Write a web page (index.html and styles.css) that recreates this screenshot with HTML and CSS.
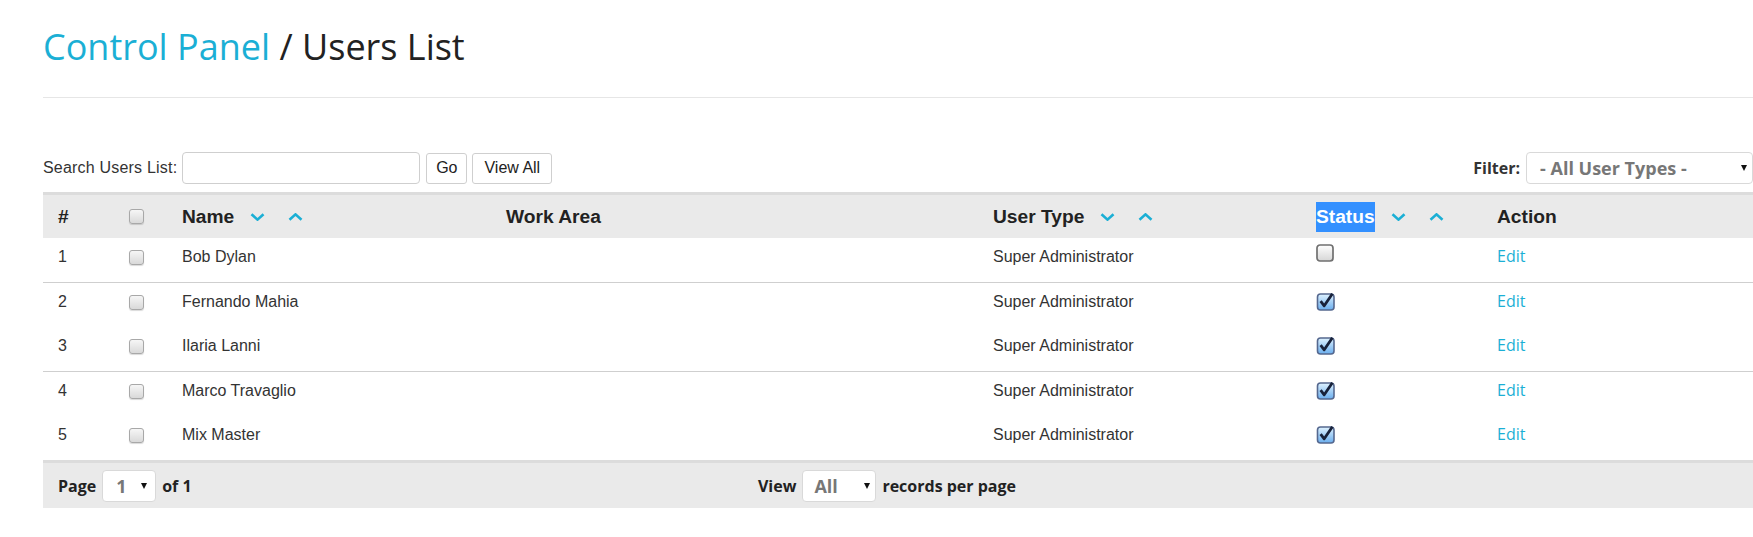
FILE: index.html
```html
<!DOCTYPE html>
<html lang="en">
<head>
<meta charset="utf-8">
<title>Control Panel / Users List</title>
<link rel="stylesheet" href="styles.css">
</head>
<body>
<svg class="defs" width="0" height="0" aria-hidden="true">
  <defs>
    <linearGradient id="gUn" x1="0" y1="0" x2="0" y2="1">
      <stop offset="0" stop-color="#ffffff"/>
      <stop offset="1" stop-color="#d6d6d6"/>
    </linearGradient>
    <linearGradient id="gCk" x1="0" y1="0" x2="0" y2="1">
      <stop offset="0" stop-color="#dff2fe"/>
      <stop offset="1" stop-color="#6aaeee"/>
    </linearGradient>
  </defs>
</svg>
<div class="page">
  <h1 class="title"><a class="crumb" href="#">Control Panel</a> / Users List</h1>
  <div class="divider"></div>

  <div class="toolbar">
    <div class="search">
      <span class="search-label">Search Users List:</span>
      <input class="search-input" type="text">
      <button class="btn btn-go">Go</button>
      <button class="btn btn-all">View All</button>
    </div>
    <div class="filter">
      <span class="filter-label">Filter:</span>
      <div class="selbox selbox-filter"><span>- All User Types -</span><i class="caret"></i></div>
    </div>
  </div>

  <table class="users">
    <colgroup>
      <col class="c-num"><col class="c-cb"><col class="c-name"><col class="c-area"><col class="c-type"><col class="c-status"><col class="c-action">
    </colgroup>
    <thead>
      <tr>
        <th>#</th>
        <th><span class="cb cb-head"></span></th>
        <th>Name<svg class="chev chev-down" viewBox="0 0 15 8"><polyline points="1.5,1.2 7.5,6.6 13.5,1.2"/></svg><svg class="chev chev-up" viewBox="0 0 15 8"><polyline points="1.5,6.8 7.5,1.4 13.5,6.8"/></svg></th>
        <th>Work Area</th>
        <th>User Type<svg class="chev chev-down" viewBox="0 0 15 8"><polyline points="1.5,1.2 7.5,6.6 13.5,1.2"/></svg><svg class="chev chev-up" viewBox="0 0 15 8"><polyline points="1.5,6.8 7.5,1.4 13.5,6.8"/></svg></th>
        <th><span class="selected">Status</span><svg class="chev chev-down" viewBox="0 0 15 8"><polyline points="1.5,1.2 7.5,6.6 13.5,1.2"/></svg><svg class="chev chev-up" viewBox="0 0 15 8"><polyline points="1.5,6.8 7.5,1.4 13.5,6.8"/></svg></th>
        <th>Action</th>
      </tr>
    </thead>
    <tbody>
      <tr class="sep">
        <td>1</td><td><span class="cb"></span></td><td>Bob Dylan</td><td></td><td>Super Administrator</td>
        <td><svg class="st st-off" width="18" height="18" viewBox="0 0 18 18"><rect x="1" y="1" width="16" height="16" rx="3" fill="url(#gUn)" stroke="#707070" stroke-width="1.7"/></svg></td>
        <td class="act"><a class="edit" href="#">Edit</a></td>
      </tr>
      <tr>
        <td>2</td><td><span class="cb"></span></td><td>Fernando Mahia</td><td></td><td>Super Administrator</td>
        <td><svg class="st" width="20" height="19" viewBox="0 0 20 19"><rect x="1.5" y="2" width="16.5" height="16" rx="3" fill="url(#gCk)" stroke="#55688f" stroke-width="1.6"/><path d="M4.6 9.2 L8.2 13.8 L16.4 1.8" fill="none" stroke="#18223a" stroke-width="2.8" stroke-linejoin="round"/></svg></td>
        <td class="act"><a class="edit" href="#">Edit</a></td>
      </tr>
      <tr class="sep">
        <td>3</td><td><span class="cb"></span></td><td>Ilaria Lanni</td><td></td><td>Super Administrator</td>
        <td><svg class="st" width="20" height="19" viewBox="0 0 20 19"><rect x="1.5" y="2" width="16.5" height="16" rx="3" fill="url(#gCk)" stroke="#55688f" stroke-width="1.6"/><path d="M4.6 9.2 L8.2 13.8 L16.4 1.8" fill="none" stroke="#18223a" stroke-width="2.8" stroke-linejoin="round"/></svg></td>
        <td class="act"><a class="edit" href="#">Edit</a></td>
      </tr>
      <tr>
        <td>4</td><td><span class="cb"></span></td><td>Marco Travaglio</td><td></td><td>Super Administrator</td>
        <td><svg class="st" width="20" height="19" viewBox="0 0 20 19"><rect x="1.5" y="2" width="16.5" height="16" rx="3" fill="url(#gCk)" stroke="#55688f" stroke-width="1.6"/><path d="M4.6 9.2 L8.2 13.8 L16.4 1.8" fill="none" stroke="#18223a" stroke-width="2.8" stroke-linejoin="round"/></svg></td>
        <td class="act"><a class="edit" href="#">Edit</a></td>
      </tr>
      <tr>
        <td>5</td><td><span class="cb"></span></td><td>Mix Master</td><td></td><td>Super Administrator</td>
        <td><svg class="st" width="20" height="19" viewBox="0 0 20 19"><rect x="1.5" y="2" width="16.5" height="16" rx="3" fill="url(#gCk)" stroke="#55688f" stroke-width="1.6"/><path d="M4.6 9.2 L8.2 13.8 L16.4 1.8" fill="none" stroke="#18223a" stroke-width="2.8" stroke-linejoin="round"/></svg></td>
        <td class="act"><a class="edit" href="#">Edit</a></td>
      </tr>
    </tbody>
  </table>

  <div class="tfoot">
    <div class="pager">
      <span class="flabel">Page</span>
      <div class="selbox selbox-page"><span>1</span><i class="caret"></i></div>
      <span class="flabel">of 1</span>
    </div>
    <div class="pager">
      <span class="flabel">View</span>
      <div class="selbox selbox-view"><span>All</span><i class="caret"></i></div>
      <span class="flabel">records per page</span>
    </div>
    <div></div>
  </div>
</div>
</body>
</html>
```

FILE: styles.css
```css
html, body {
  margin: 0;
  padding: 0;
  background: #fff;
}

body {
  font-family: "Liberation Sans", Arial, sans-serif;
  font-size: 16px;
  color: #333;
}

.defs {
  display: block;
  width: 0;
  height: 0;
  overflow: hidden;
}

.page {
  padding-left: 43px;
}

.title {
  margin: 0;
  padding-top: 27px;
  font-family: "Open Sans", "Liberation Sans", sans-serif;
  font-weight: 400;
  font-size: 36px;
  line-height: 40px;
  color: #222;
}

.crumb {
  color: #1bafd5;
  text-decoration: none;
}

.divider {
  margin-top: 30px;
  height: 1px;
  background: #e6e6e6;
}

.toolbar {
  margin-top: 54px;
  height: 32px;
  display: flex;
  justify-content: space-between;
  align-items: center;
}

.search {
  display: flex;
  align-items: center;
}

.search-label {
  color: #333;
  letter-spacing: 0.2px;
  margin-right: 5px;
}

.search-input {
  box-sizing: border-box;
  width: 238px;
  height: 32px;
  border: 1px solid #cfcfcf;
  border-radius: 4px;
  margin: 0;
  padding: 0 6px;
  font: 16px "Liberation Sans", Arial, sans-serif;
}

.btn {
  box-sizing: border-box;
  height: 31px;
  margin: 0 0 0 6px;
  padding: 0;
  background: #fff;
  border: 1px solid #cfcfcf;
  border-radius: 3px;
  font: 16px "Liberation Sans", Arial, sans-serif;
  color: #222;
  text-align: center;
}

.btn-go { width: 41px; }
.btn-all { width: 80px; margin-left: 5px; }

.filter {
  display: flex;
  align-items: center;
}

.filter-label {
  font-family: "Open Sans", "Liberation Sans", sans-serif;
  font-weight: 700;
  font-size: 16px;
  color: #333;
  margin-right: 6px;
}

.selbox {
  box-sizing: border-box;
  height: 32px;
  display: flex;
  align-items: center;
  justify-content: space-between;
  background: #fff;
  border: 1px solid #d9d9d9;
  border-radius: 4px;
  font-family: "Open Sans", "Liberation Sans", sans-serif;
  font-weight: 700;
  font-size: 18px;
  color: #777;
}

.selbox-filter {
  width: 227px;
  padding: 0 5px 0 13px;
}

.selbox-page {
  width: 54px;
  padding: 0 8px 0 13px;
}

.selbox-view {
  width: 74px;
  padding: 0 5px 0 11px;
}

.caret {
  display: block;
  width: 0;
  height: 0;
  border-left: 3px solid transparent;
  border-right: 3px solid transparent;
  border-top: 6px solid #111;
}

/* Table */
.users {
  width: 100%;
  margin-top: 8px;
  border-collapse: collapse;
  table-layout: fixed;
}

.c-num { width: 71px; }
.c-cb { width: 53px; }
.c-name { width: 324px; }
.c-area { width: 487px; }
.c-type { width: 323px; }
.c-status { width: 181px; }
.c-action { width: auto; }

.users thead tr {
  background: #eaeaea;
  border-top: 3px solid #dcdcdc;
}

.users th {
  height: 43px;
  padding: 0 15px;
  text-align: left;
  vertical-align: middle;
  font-family: "Liberation Sans", Arial, sans-serif;
  font-weight: 700;
  font-size: 19.2px;
  line-height: 30px;
  color: #222;
  white-space: nowrap;
}

.selected {
  display: inline-block;
  background: #3390ff;
  color: #fff;
  line-height: 30px;
  vertical-align: top;
}

.chev {
  width: 15px;
  height: 8px;
  vertical-align: middle;
  fill: none;
  stroke: #1bafd5;
  stroke-width: 2.6;
}

.chev-down { margin-left: 16px; }
.chev-up { margin-left: 23px; }

.users td {
  height: 20px;
  padding: 9px 15px 15px;
  line-height: 20px;
  vertical-align: top;
  color: #333;
  white-space: nowrap;
}

.users td.act {
  font-family: "Open Sans", "Liberation Sans", sans-serif;
  padding-top: 8px;
  padding-bottom: 16px;
}

.users tr.sep td {
  border-bottom: 1px solid #cfcfcf;
}

.cb {
  display: block;
  box-sizing: border-box;
  width: 15px;
  height: 15px;
  border: 1px solid #a8a8a8;
  border-radius: 3px;
  background: linear-gradient(#f6f6f6, #d9d9d9);
  box-shadow: 0 1px 1px rgba(0, 0, 0, 0.15);
  margin-top: 3px;
}

.cb-head {
  margin-top: 0;
}

.st {
  display: block;
}

.st-off {
  margin-top: -3px;
}

.edit {
  font-size: 16px;
  color: #1bafd5;
  text-decoration: none;
}

/* Footer */
.tfoot {
  box-sizing: border-box;
  border-top: 3px solid #dcdcdc;
  background: #eaeaea;
  height: 48px;
  display: grid;
  grid-template-columns: 1fr auto 1fr;
  align-items: center;
  padding: 0 37px 0 15px;
}

.pager {
  display: flex;
  align-items: center;
  gap: 6px;
}

.flabel {
  font-family: "Open Sans", "Liberation Sans", sans-serif;
  font-weight: 700;
  font-size: 16px;
  color: #222;
}
```
